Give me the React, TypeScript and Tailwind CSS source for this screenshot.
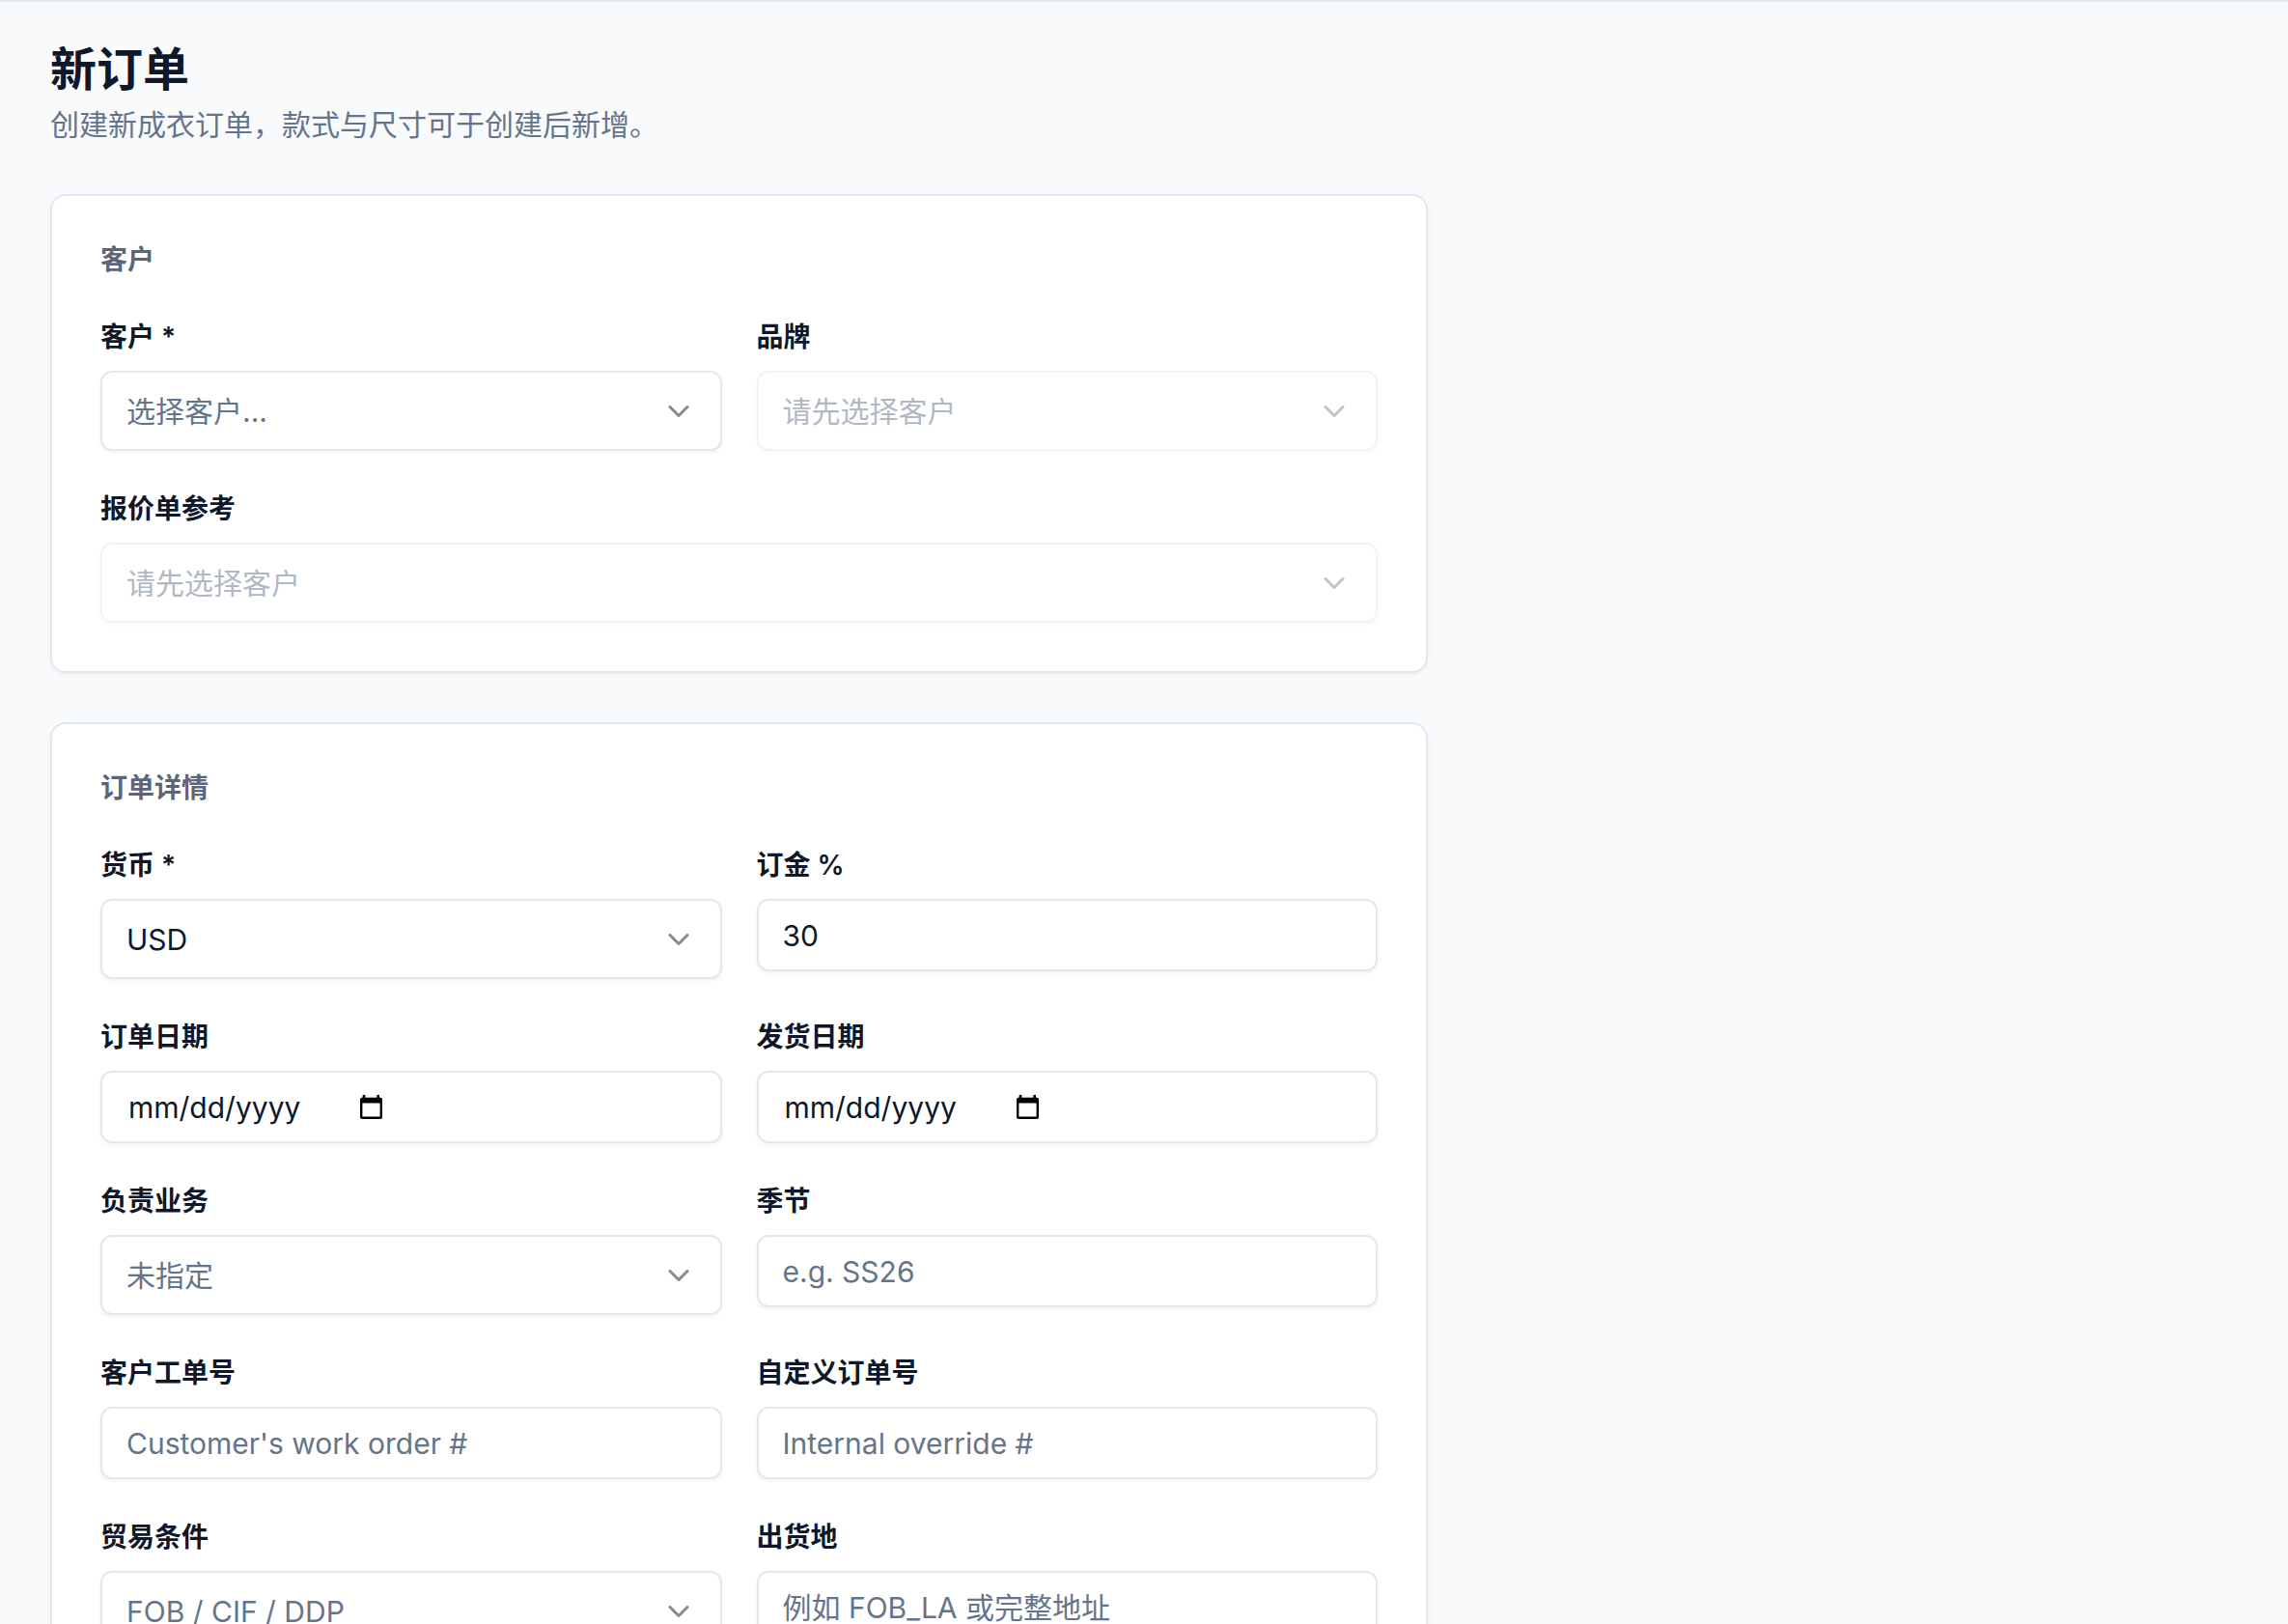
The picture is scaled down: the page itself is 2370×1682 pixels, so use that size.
import { ChevronDown } from 'lucide-react';

interface SelectProps {
  value?: string;
  placeholder?: string;
  disabled?: boolean;
}

function Label({ children }: { children: React.ReactNode }) {
  return (
    <label className="block text-[28px] leading-[40px] font-semibold text-[#0f172a] mb-[15px]">
      {children}
    </label>
  );
}

function SelectBox({ value, placeholder, disabled }: SelectProps) {
  return (
    <div
      className={
        disabled
          ? 'flex h-[83px] items-center justify-between rounded-[12px] border-2 border-[#e2e8f0] bg-white px-[25px] opacity-50 shadow-[0_2px_4px_rgba(15,23,42,0.05)]'
          : 'flex h-[83px] items-center justify-between rounded-[12px] border-2 border-[#e2e8f0] bg-white px-[25px] shadow-[0_2px_4px_rgba(15,23,42,0.05)]'
      }
    >
      {value ? (
        <span className="text-[30px] leading-[40px] text-[#0f172a]">{value}</span>
      ) : (
        <span className="text-[30px] leading-[40px] text-[#64748b]">{placeholder}</span>
      )}
      <ChevronDown size={36} strokeWidth={2} className="text-[#0f172a] opacity-50" />
    </div>
  );
}

function TextInput({ value, placeholder }: { value?: string; placeholder?: string }) {
  return (
    <input
      defaultValue={value}
      placeholder={placeholder}
      className="block h-[75px] w-full rounded-[12px] border-2 border-[#e2e8f0] bg-white px-[25px] text-[30px] text-[#0f172a] outline-none placeholder:text-[#64748b] shadow-[0_2px_4px_rgba(15,23,42,0.05)]"
    />
  );
}

function CalendarIcon() {
  return (
    <svg width="23" height="25" viewBox="0 0 23 25" fill="#000">
      <rect x="2.7" y="0" width="2.6" height="4" />
      <rect x="17.4" y="0" width="2.6" height="4" />
      <rect x="0" y="2.7" width="23" height="22.3" rx="2" />
      <rect x="2.4" y="8.4" width="18.2" height="14.2" rx="0.6" fill="#fff" />
    </svg>
  );
}

function DateInput() {
  return (
    <div className="flex h-[75px] items-center rounded-[12px] border-2 border-[#e2e8f0] bg-white pl-[27px] shadow-[0_2px_4px_rgba(15,23,42,0.05)]">
      <span className="w-[240px] text-[30px] leading-[40px] text-[#0f172a]">mm/dd/yyyy</span>
      <CalendarIcon />
    </div>
  );
}

function Field({ label, children }: { label: string; children: React.ReactNode }) {
  return (
    <div>
      <Label>{label}</Label>
      {children}
    </div>
  );
}

function Card({ title, children }: { title: string; children: React.ReactNode }) {
  return (
    <section className="w-[1427px] rounded-[16px] border-2 border-[#e2e8f0] bg-white px-[50px] pt-[46px] pb-[50px] shadow-[0_2px_5px_rgba(15,23,42,0.05)]">
      <h2 className="mb-[40px] text-[28px] leading-[40px] font-semibold text-[#5a6679]">{title}</h2>
      {children}
    </section>
  );
}

export default function App() {
  return (
    <div className="min-h-screen border-t-2 border-[#e2e8f0] bg-[#f8fafc] font-['Inter','Noto_Sans_CJK_SC',sans-serif]">
      <div className="pl-[52px] pt-[38px] pb-[60px]">
        {/* Page header */}
        <h1 className="text-[48px] leading-[64px] font-bold text-[#0f172a]">新订单</h1>
        <p className="mt-[3px] text-[30px] leading-[44px] text-[#64748b]">
          创建新成衣订单，款式与尺寸可于创建后新增。
        </p>

        <div className="mt-[50px] flex flex-col gap-[51px]">
          {/* Customer */}
          <Card title="客户">
            <div className="grid grid-cols-2 gap-x-[36px]">
              <Field label="客户 *">
                <SelectBox placeholder="选择客户..." />
              </Field>
              <Field label="品牌">
                <SelectBox placeholder="请先选择客户" disabled />
              </Field>
            </div>
            <div className="mt-[40px]">
              <Field label="报价单参考">
                <SelectBox placeholder="请先选择客户" disabled />
              </Field>
            </div>
          </Card>

          {/* Order details */}
          <Card title="订单详情">
            <div className="grid grid-cols-2 gap-x-[36px] gap-y-[40px]">
              <Field label="货币 *">
                <SelectBox value="USD" />
              </Field>
              <Field label="订金 %">
                <TextInput value="30" />
              </Field>
              <Field label="订单日期">
                <DateInput />
              </Field>
              <Field label="发货日期">
                <DateInput />
              </Field>
              <Field label="负责业务">
                <SelectBox placeholder="未指定" />
              </Field>
              <Field label="季节">
                <TextInput placeholder="e.g. SS26" />
              </Field>
              <Field label="客户工单号">
                <TextInput placeholder="Customer's work order #" />
              </Field>
              <Field label="自定义订单号">
                <TextInput placeholder="Internal override #" />
              </Field>
              <Field label="贸易条件">
                <SelectBox placeholder="FOB / CIF / DDP" />
              </Field>
              <Field label="出货地">
                <TextInput placeholder="例如 FOB_LA 或完整地址" />
              </Field>
            </div>
          </Card>
        </div>
      </div>
    </div>
  );
}
